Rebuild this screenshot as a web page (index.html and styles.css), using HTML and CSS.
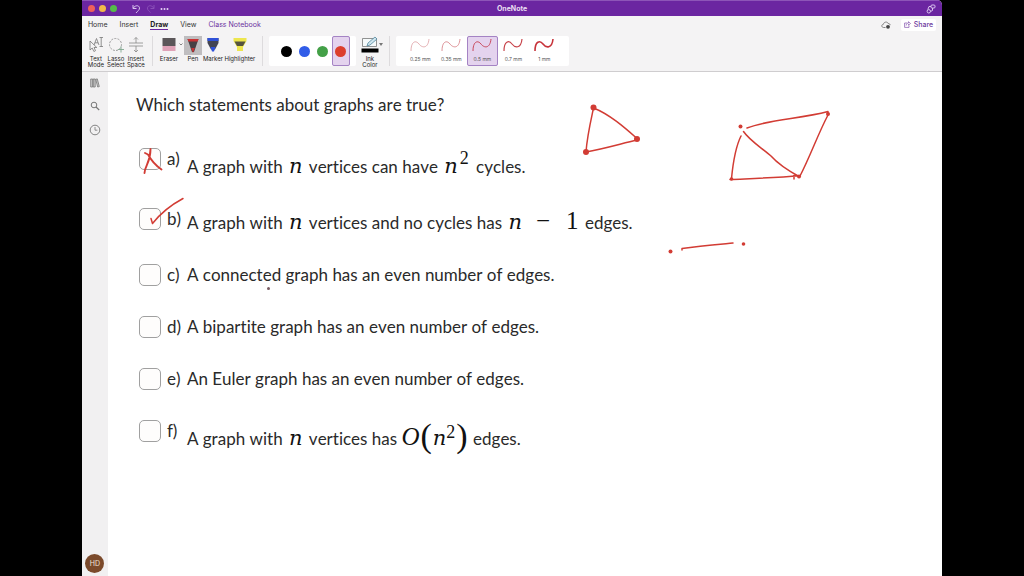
FILE: index.html
```html
<!DOCTYPE html>
<html lang="en">
<head>
<meta charset="utf-8">
<title>OneNote</title>
<link rel="stylesheet" href="styles.css">
</head>
<body>
<div class="app">
  <header class="titlebar">
    <div class="lights"><span class="light red"></span><span class="light yellow"></span><span class="light green"></span></div>
    <div class="history">
      <button class="plain" aria-label="Undo"><svg width="9" height="10" viewBox="0 0 9 10"><path d="M1 1v3.500h3.500M1.200 4.200C3 1 7 1 7.500 3.800C7.800 6 5.500 7 4 9" fill="none" stroke="#d9c3ee"/></svg></button>
      <button class="plain" aria-label="Redo"><svg width="9" height="10" viewBox="0 0 9 10"><path d="M8 1v3.500h-3.500M7.800 4.200C6 1 2 1 1.500 3.800C1.200 6 3 7 4.500 8.500" fill="none" stroke="#8a4fb8"/></svg></button>
      <button class="plain" aria-label="More"><svg width="9" height="10" viewBox="0 0 9 10"><g fill="#e5d5f3"><circle cx="1.500" cy="5" r="1"/><circle cx="4.500" cy="5" r="1"/><circle cx="7.500" cy="5" r="1"/></g></svg></button>
    </div>
    <h1 class="title">OneNote</h1>
    <button class="plain connect" aria-label="Connections"><svg width="10" height="10" viewBox="0 0 10 10"><g fill="none" stroke="#d9c3ee"><rect x="5" y="1" width="4" height="3" rx="1"/><circle cx="2.800" cy="7.300" r="1.700"/><path d="M5 2.500H3L1.800 5.500M4.500 7.500L6.500 6.500V4"/></g></svg></button>
  </header>

  <nav class="tabs">
    <a class="tab" href="#">Home</a>
    <a class="tab" href="#">Insert</a>
    <a class="tab current" href="#">Draw</a>
    <a class="tab" href="#">View</a>
    <a class="tab notebook" href="#">Class Notebook</a>
    <button class="plain sync" aria-label="Sync status"><svg width="10" height="8" viewBox="0 0 10 8"><path d="M4.500 6.500H2.500C.2 6.300.3 3.400 2.400 3.300C2.800.6 6.500.4 7.200 2.500C8.500 2.500 9.200 3.200 9 4.200" fill="none" stroke="#777" stroke-width=".9"/><circle cx="7" cy="5.800" r="1.900" fill="#444"/></svg></button>
    <button class="share"><svg width="7" height="7" viewBox="0 0 7 7"><path d="M3 2H.6v4.400H5V4.500M2.200 4.500C2.400 2.700 3.400 2 4.500 2V.7L6.500 2.500L4.500 4.200V3" fill="none" stroke="#8350ae" stroke-width=".7"/></svg>Share</button>
  </nav>

  <div class="tools">
    <button class="tool"><svg width="16" height="17" viewBox="0 0 16 17"><path d="M2 5v9l2.200-2 1.700 3.500 1.600-.8L6 11.500h2.800z" fill="#f5f4f5" stroke="#777" stroke-width=".8"/><path d="M6 9L8.500 2.500 11 9M7 6.800h3M11.500 1.500h3.500M13.200 1.500v9M11.500 10.500H15" fill="none" stroke="#777" stroke-width=".8"/></svg><span>Text<br>Mode</span></button>
    <button class="tool"><svg width="16" height="17" viewBox="0 0 16 17"><circle cx="7.500" cy="8.500" r="6" fill="none" stroke="#999" stroke-dasharray="2 1.300"/><path d="M13 10.500v6M10 13.500h6" stroke="#80a890" stroke-width=".9"/></svg><span>Lasso<br>Select</span></button>
    <button class="tool"><svg width="16" height="17" viewBox="0 0 16 17"><path d="M1 7h14M1 10h14M8 7V1.500M6 3.500l2-2 2 2M8 10v6M6 14l2 2 2-2" fill="none" stroke="#888" stroke-width=".8"/></svg><span>Insert<br>Space</span></button>
    <span class="divider"></span>
    <button class="tool eraser"><svg width="14" height="17" viewBox="0 0 14 17"><path d="M.5 2h13v8H.5z" fill="#5b5659"/><path d="M.5 10h13v5H.5z" fill="#dfa2b7"/></svg><span>Eraser</span></button>
    <button class="arrow" aria-label="Eraser options"><svg width="4" height="3" viewBox="0 0 4 3"><path d="M.5.5L2 2 3.500.5" fill="none" stroke="#666" stroke-width=".8"/></svg></button>
    <button class="tool pen"><svg width="18" height="19" viewBox="0 0 18 19"><path fill="#bfbdbf" d="M0 0h18v19H0z"/><path d="M3.500 3h11L10 16H8z" fill="#464044"/><path d="M3.500 3h11l-.8 2.500H4.300zM7.200 12h3.600L9 17z" fill="#c83234"/></svg><span>Pen</span></button>
    <button class="tool marker"><svg width="12" height="17" viewBox="0 0 12 17"><path d="M.5 2h11v5L8 13.500H4L.5 7z" fill="#424453"/><path d="M.5 2h11v3H.5zM3.500 11h5L7 15.500H5z" fill="#2f51d8"/></svg><span>Marker</span></button>
    <button class="tool highlighter"><svg width="14" height="17" viewBox="0 0 14 17"><path d="M.5 2h13v3L10 11v4H4v-4L.5 5z" fill="#ede64e"/><path d="M1.500 5.500h11L10 10H4z" fill="#55533e"/></svg><span>Highlighter</span></button>
    <span class="divider"></span>
    <div class="palette">
      <button class="swatch" aria-label="Black"><span class="dot black"></span></button>
      <button class="swatch" aria-label="Blue"><span class="dot blue"></span></button>
      <button class="swatch" aria-label="Green"><span class="dot leaf"></span></button>
      <button class="swatch selected" aria-label="Red"><span class="dot crimson"></span></button>
    </div>
    <button class="tool ink"><svg width="18" height="17" viewBox="0 0 18 17"><path d="M1.500 2.500h14v8h-14z" fill="#f6fafb" stroke="#777" stroke-width=".8"/><path d="M6 10l1-3L14 1l2 2-7 6z" fill="#cfe5ee" stroke="#54889e" stroke-width=".8"/><path d="M.5 12.500h17v4H.5z"/></svg><span>Ink<br>Color</span></button>
    <button class="arrow" aria-label="Ink color options"><svg width="4" height="3" viewBox="0 0 4 3"><path d="M0 0h4L2 3z" fill="#777"/></svg></button>
    <span class="divider"></span>
    <div class="widths">
      <button class="width"><svg width="22" height="17" viewBox="0 0 22 17"><path d="M2 15C2 5 7 4 10 8S19 13 20 3" fill="none" stroke="#d98f94" stroke-width=".7"/></svg><span>0.25 mm</span></button>
      <button class="width"><svg width="22" height="17" viewBox="0 0 22 17"><path d="M2 15C2 5 7 4 10 8S19 13 20 3" fill="none" stroke="#d4777d" stroke-width=".8"/></svg><span>0.35 mm</span></button>
      <button class="width selected"><svg width="22" height="17" viewBox="0 0 22 17"><path d="M2 15C2 5 7 4 10 8S19 13 20 3" fill="none" stroke="#c9485c"/></svg><span>0.5 mm</span></button>
      <button class="width"><svg width="22" height="17" viewBox="0 0 22 17"><path d="M2 15C2 5 7 4 10 8S19 13 20 3" fill="none" stroke="#c7434a" stroke-width="1.200"/></svg><span>0.7 mm</span></button>
      <button class="width"><svg width="22" height="17" viewBox="0 0 22 17"><path d="M2 15C2 5 7 4 10 8S19 13 20 3" fill="none" stroke="#c7333a" stroke-width="1.600"/></svg><span>1 mm</span></button>
    </div>
  </div>

  <div class="workspace">
    <aside class="sidebar">
      <button class="plain" aria-label="Notebooks"><svg width="10" height="10" viewBox="0 0 10 10"><path d="M.7 1h2v8h-2zM3.200 1h2v8h-2zM5.700 1.300l1.600-.4 2 7.700-1.600.4z" fill="#c8c8c8" stroke="#777" stroke-width=".8"/></svg></button>
      <button class="plain" aria-label="Search"><svg width="10" height="10" viewBox="0 0 10 10"><circle cx="4" cy="4" r="2.800" fill="none" stroke="#777"/><path d="M6 6l3.200 3" stroke="#777" stroke-width="1.200"/></svg></button>
      <button class="plain" aria-label="Recent"><svg width="12" height="12" viewBox="0 0 12 12"><circle cx="6" cy="6" r="4.800" fill="none" stroke="#777" stroke-width=".9"/><path d="M6 3v3.200h2.400" fill="none" stroke="#777" stroke-width=".8"/></svg></button>
      <button class="avatar">HD</button>
    </aside>
    <main class="page">
      <h2 class="question">Which statements about graphs are true?</h2>
      <div class="options">
        <div class="option"><input type="checkbox" id="a"><label for="a"><span class="letter">a)</span><span class="statement low">A graph with <i class="math var">n</i> vertices can have <i class="math var">n</i><span class="math power">2</span> cycles.</span></label></div>
        <div class="option"><input type="checkbox" id="b"><label for="b"><span class="letter">b)</span><span class="statement mid">A graph with <i class="math var">n</i> vertices and no cycles has <i class="math var">n</i><span class="math minus">−</span><span class="math one">1</span> edges.</span></label></div>
        <div class="option"><input type="checkbox" id="c"><label for="c"><span class="letter">c)</span><span class="statement">A connected graph has an even number of edges.</span></label></div>
        <div class="option"><input type="checkbox" id="d"><label for="d"><span class="letter">d)</span><span class="statement">A bipartite graph has an even number of edges.</span></label></div>
        <div class="option"><input type="checkbox" id="e"><label for="e"><span class="letter">e)</span><span class="statement">An Euler graph has an even number of edges.</span></label></div>
        <div class="option"><input type="checkbox" id="f"><label for="f"><span class="letter">f)</span><span class="statement low">A graph with <i class="math var">n</i> vertices has <i class="math">O</i><span class="math paren">(</span><i class="math var tight">n</i><span class="math power short">2</span><span class="math paren">)</span> edges.</span></label></div>
      </div>
      <svg class="strokes" width="833" height="504" viewBox="108 72 833 504">
        <g fill="none" stroke="#d23c34" stroke-width="1.500" stroke-linecap="round" stroke-linejoin="round">
          <path d="M144.500 173C145 165 150.500 163 150.500 149M145 153L148 154.500C151 160 155 165 161.500 169.500" stroke-width="1.900"/>
          <path d="M151 218.500L152.500 223.500C160 214 169 206 183 198.500"/>
          <path d="M593.500 108C590.500 122 587 137 586 152C603 149 620 144 637 140M593.500 108C609 114 624 127 637 138.500"/>
          <path d="M747 128C770 119 800 119 828 111.500L827.500 116C818 134 810 157 800 176M743.500 131.500C750 141 762 148 771 156C779 165 789 171 799 176.500M741 136C735 148 733 163 731.500 178.500M730 179.500C752 178.500 775 178 800 175.500M794 175.500V179"/>
          <path d="M682 250V248.500C699 246 717 244.500 733 243"/>
        </g>
        <g fill="#d23c34">
          <circle cx="593.500" cy="107.500" r="3"/><circle cx="586" cy="152" r="3"/><circle cx="637" cy="139" r="3"/>
          <circle cx="740.500" cy="126.500" r="2"/><circle cx="828" cy="114" r="2"/><circle cx="799" cy="176.500" r="2"/><circle cx="731.500" cy="179" r="1.800"/>
          <circle cx="670.500" cy="251.500" r="2"/><circle cx="743.500" cy="244" r="1.800"/>
        </g>
        <circle cx="268.500" cy="288.500" r="1.500" fill="#785b62"/>
      </svg>
    </main>
  </div>
</div>
</body>
</html>
```
FILE: styles.css
```css
* { box-sizing: border-box; }
body { margin: 0; background: #000; font-family: Inter, "Liberation Sans", sans-serif; color: #222; }
button { font: inherit; color: inherit; border: 0; background: none; padding: 0; }
svg { display: block; flex: none; }
.plain { display: flex; }

.app { display: flex; flex-direction: column; min-height: 100vh; margin: 0 8%; background: #f4f3f4; border-radius: 0 5px 0 0; overflow: hidden; }

.titlebar { display: grid; grid-template-columns: 1fr auto 1fr; grid-template-areas: "left title right"; align-items: center; height: 16px; padding: 0 6px; background: #6b26a1; border-top: 1px solid #8d55b8; }
.lights, .history { grid-area: left; display: flex; align-items: center; }
.lights { gap: 4px; }
.light { width: 7px; height: 7px; border-radius: 50%; }
.red { background: #f0605a; }
.yellow { background: #f3b94a; }
.green { background: #55bb49; }
.history { gap: 5px; padding-left: 44px; }
.title { grid-area: title; margin: 0; font-size: 7px; line-height: 9px; font-weight: 700; color: #e9dff2; }
.connect { grid-area: right; justify-self: end; }

.tabs { display: flex; align-items: center; height: 17px; padding: 0 6px 0 6px; gap: 12px; font-size: 7px; line-height: 9px; }
.tab { color: #333; text-decoration: none; padding: 1px 0 0; border-bottom: 1px solid transparent; }
.current { font-weight: 700; color: #222; border-color: #6b26a1; }
.notebook { color: #6b32a0; }
.sync { margin-left: auto; }
.share { display: flex; align-items: center; gap: 3px; height: 12px; margin-left: -2px; padding: 0 3px; background: #fff; border-radius: 2px; color: #6e3a9e; font-weight: 500; }

.tools { display: flex; align-items: flex-start; height: 39px; padding: 3px 4px 0; border-bottom: 1px solid #cfcdcf; font-size: 6px; line-height: 6px; }
.tool { display: flex; flex-direction: column; align-items: center; gap: 3px; width: 20px; white-space: nowrap; }
.divider { width: 1px; height: 30px; margin: 0 6px; background: #dddbdd; }
.arrow { width: 4px; padding-top: 7px; }
.pen { width: 18px; gap: 1px; margin-left: 1px; }
.marker { width: 22px; }
.highlighter { width: 32px; }
.palette, .widths { display: flex; height: 30px; background: #fff; border-radius: 2px; }
.palette { padding: 0 6px 0 9px; }
.swatch { display: grid; place-items: center; width: 18px; border: 1px solid transparent; border-radius: 2px; }
.selected { background: #e4d3ee; outline: 1px solid #a483c4; outline-offset: -1px; }
.dot { width: 11px; height: 11px; border-radius: 50%; }
.black { background: #000; }
.blue { background: #315de8; }
.leaf { background: #43a047; }
.crimson { background: #dc3f2d; }
.ink { width: 18px; margin-left: 5px; }
.widths { padding: 0 9px; }
.width { display: flex; flex-direction: column; align-items: center; gap: 3px; width: 31px; border-radius: 2px; font-size: 5px; color: #555; }

.workspace { display: flex; flex: 1; }
.sidebar { display: flex; flex-direction: column; align-items: center; gap: 13px; width: 26px; padding: 6px 0 3px; background: #f1f0f1; }
.avatar { width: 19px; height: 19px; margin-top: auto; border-radius: 50%; background: #7b4a2b; color: #f0e4da; font-size: 7px; line-height: 19px; }

.page { position: relative; flex: 1; padding: 22px 28px; background: #fff; font-family: Lato, sans-serif; font-size: 17px; line-height: 22px; font-variant-ligatures: none; font-kerning: none; color: #2a2a2a; }
.question { margin: 0 0 32px; font-size: 17px; font-weight: 400; }
.options { display: flex; flex-direction: column; gap: 30px; padding-left: 3px; }
.option { display: flex; align-items: flex-start; gap: 6px; }
.option input { appearance: none; flex: none; width: 22px; height: 22px; margin: 0; border: 1px solid #a0a0a0; border-radius: 5px; background: #fefdfc; }
.option label { display: flex; }
.letter { width: 20px; flex: none; }
.low { padding-top: 8px; }
.mid { padding-top: 4px; }
.math { font-family: "Liberation Serif", serif; font-size: 25px; line-height: 0; color: #111; }
.var { padding: 0 2px; font-family: "DejaVu Serif", serif; font-size: 21px; }
.tight { padding: 0; }
.minus { padding: 0 16px 0 12px; }
.one { padding-right: 2px; }
.power { padding: 0 3px 0 0; font-size: 18px; vertical-align: 9px; }
.short { padding: 0; vertical-align: 7px; }
.paren { padding: 0 1px; font-size: 34px; vertical-align: -2px; }
.strokes { position: absolute; top: 0; left: 0; pointer-events: none; }
```
